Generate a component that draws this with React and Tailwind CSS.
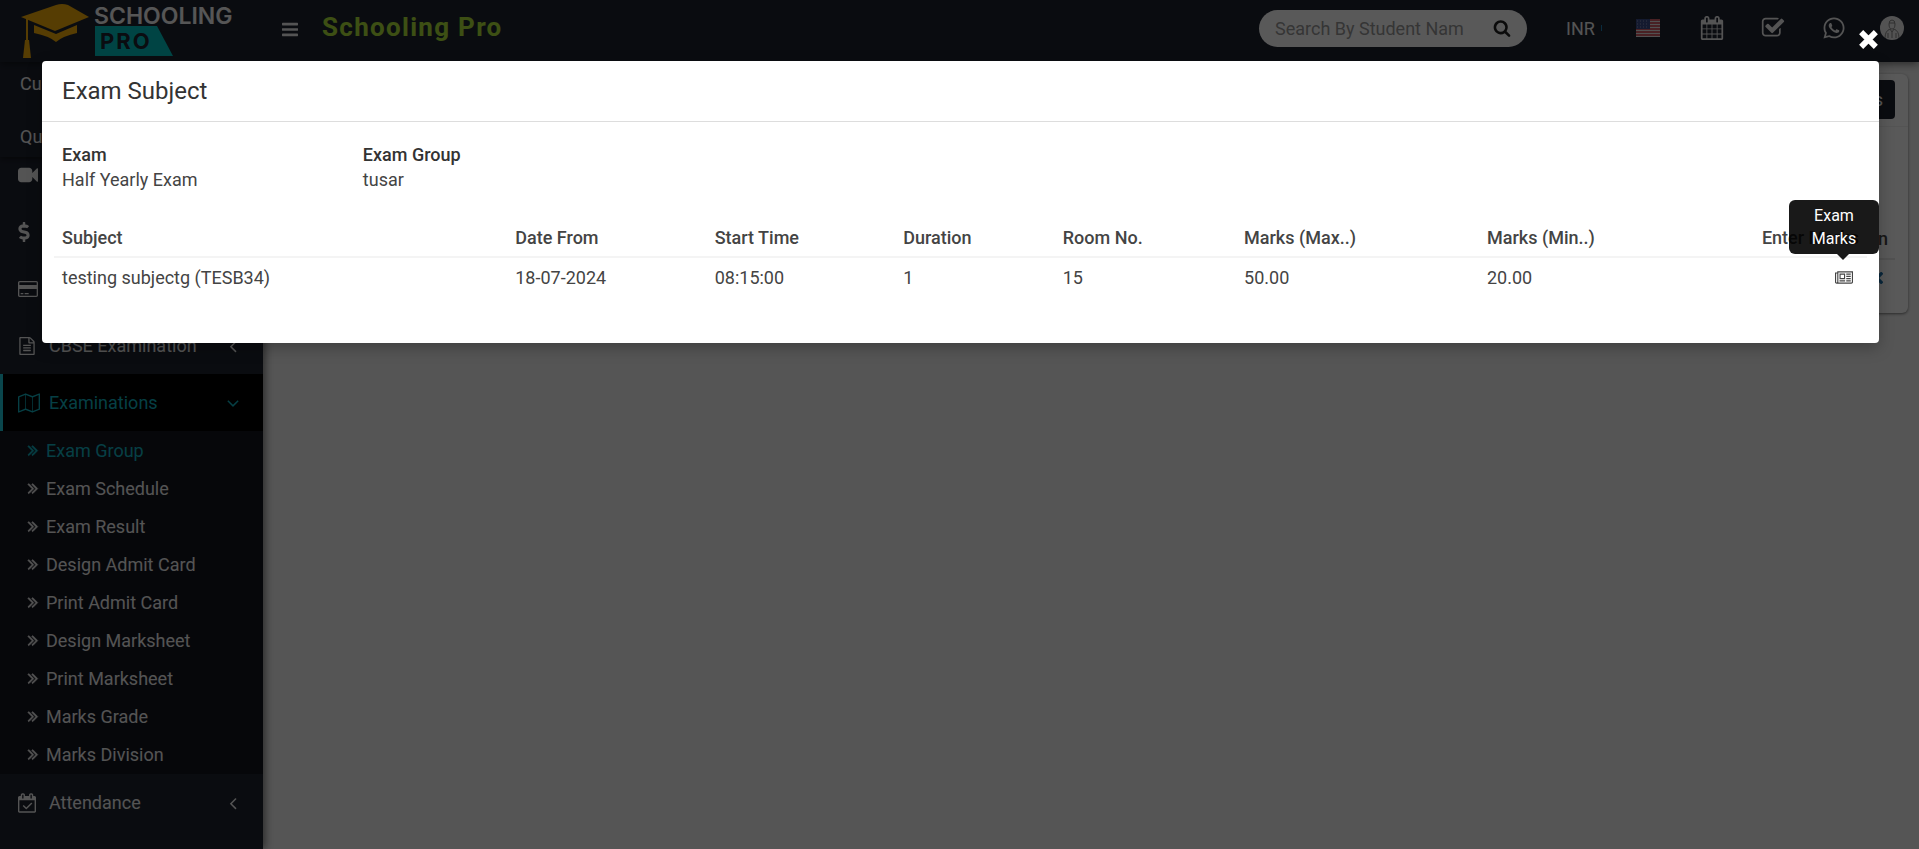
import React from 'react';
import { FaWhatsapp, FaDollarSign, FaTimes } from 'react-icons/fa';

const icons = {
  bars: { w: 1536, d: 'M1536 1344v128q0 26-19 45t-45 19h-1408q-26 0-45-19t-19-45v-128q0-26 19-45t45-19h1408q26 0 45 19t19 45zm0-512v128q0 26-19 45t-45 19h-1408q-26 0-45-19t-19-45v-128q0-26 19-45t45-19h1408q26 0 45 19t19 45zm0-512v128q0 26-19 45t-45 19h-1408q-26 0-45-19t-19-45v-128q0-26 19-45t45-19h1408q26 0 45 19t19 45z' },
  search: { w: 1792, d: 'M1216 832q0-185-131.5-316.5t-316.5-131.5-316.5 131.5-131.5 316.5 131.5 316.5 316.5 131.5 316.5-131.5 131.5-316.5zm512 832q0 52-38 90t-90 38q-54 0-90-38l-343-342q-179 124-399 124-143 0-273.5-55.5t-225-150-150-225-55.5-273.5 55.5-273.5 150-225 225-150 273.5-55.5 273.5 55.5 225 150 150 225 55.5 273.5q0 220-124 399l343 343q37 37 37 90z' },
  calendar: { w: 1792, d: 'M192 1664h288v-288h-288v288zm352 0h320v-288h-320v288zm-352-352h288v-320h-288v320zm352 0h320v-320h-320v320zm-352-384h288v-288h-288v288zm736 736h320v-288h-320v288zm-384-736h320v-288h-320v288zm768 736h288v-288h-288v288zm-384-352h320v-320h-320v320zm-352-864v-288q0-13-9.5-22.5t-22.5-9.5h-64q-13 0-22.5 9.5t-9.5 22.5v288q0 13 9.5 22.5t22.5 9.5h64q13 0 22.5-9.5t9.5-22.5zm736 864h288v-320h-288v320zm-384-384h320v-288h-320v288zm384 0h288v-288h-288v288zm32-480v-288q0-13-9.5-22.5t-22.5-9.5h-64q-13 0-22.5 9.5t-9.5 22.5v288q0 13 9.5 22.5t22.5 9.5h64q13 0 22.5-9.5t9.5-22.5zm384-64v1280q0 52-38 90t-90 38h-1408q-52 0-90-38t-38-90v-1280q0-52 38-90t90-38h128v-96q0-66 47-113t113-47h64q66 0 113 47t47 113v96h384v-96q0-66 47-113t113-47h64q66 0 113 47t47 113v96h128q52 0 90 38t38 90z' },
  checkSquare: { w: 1792, d: 'M1472 930v318q0 119-84.5 203.5t-203.5 84.5h-832q-119 0-203.5-84.5t-84.5-203.5v-832q0-119 84.5-203.5t203.5-84.5h832q63 0 117 25 15 7 18 23 3 17-9 29l-49 49q-10 10-23 10-3 0-9-2-23-6-45-6h-832q-66 0-113 47t-47 113v832q0 66 47 113t113 47h832q66 0 113-47t47-113v-254q0-13 9-22l64-64q10-10 23-10 6 0 12 3 20 8 20 29zm231-489l-814 814q-24 24-57 24t-57-24l-430-430q-24-24-24-57t24-57l110-110q24-24 57-24t57 24l263 263 647-647q24-24 57-24t57 24l110 110q24 24 24 57t-24 57z' },
  video: { w: 1792, d: 'M1792 352v1088q0 42-39 59-13 5-25 5-27 0-45-19l-403-403v166q0 119-84.5 203.5t-203.5 84.5h-704q-119 0-203.5-84.5t-84.5-203.5v-704q0-119 84.5-203.5t203.5-84.5h704q119 0 203.5 84.5t84.5 203.5v165l403-402q18-19 45-19 12 0 25 5 39 17 39 59z' },
  card: { w: 1920, d: 'M1760 128q66 0 113 47t47 113v1216q0 66-47 113t-113 47h-1600q-66 0-113-47t-47-113v-1216q0-66 47-113t113-47h1600zm-1600 128q-13 0-22.5 9.5t-9.5 22.5v224h1664v-224q0-13-9.5-22.5t-22.5-9.5h-1600zm1600 1280q13 0 22.5-9.5t9.5-22.5v-608h-1664v608q0 13 9.5 22.5t22.5 9.5h1600zm-1504-128v-128h256v128h-256zm384 0v-128h384v128h-384z' },
  file: { w: 1792, d: 'M1596 380q28 28 48 76t20 88v1152q0 40-28 68t-68 28h-1344q-40 0-68-28t-28-68v-1600q0-40 28-68t68-28h896q40 0 88 20t76 48zm-444-244v376h376q-10-29-22-41l-313-313q-12-12-41-22zm384 1528v-1024h-416q-40 0-68-28t-28-68v-416h-768v1536h1280zm-1024-864q0-14 9-23t23-9h704q14 0 23 9t9 23v64q0 14-9 23t-23 9h-704q-14 0-23-9t-9-23v-64zm736 224q14 0 23 9t9 23v64q0 14-9 23t-23 9h-704q-14 0-23-9t-9-23v-64q0-14 9-23t23-9h704zm0 256q14 0 23 9t9 23v64q0 14-9 23t-23 9h-704q-14 0-23-9t-9-23v-64q0-14 9-23t23-9h704z' },
  map: { w: 2048, d: 'M2020 11q28 20 28 53v1408q0 20-11 36t-29 23l-640 256q-24 11-48 0l-616-246-616 246q-10 5-24 5-19 0-36-11-28-20-28-53v-1408q0-20 11-36t29-23l640-256q24-11 48 0l616 246 616-246q32-13 60 6zm-1284 135v1270l576 230v-1270zm-608 217v1270l544-217v-1270zm1792 1066v-1270l-544 217v1270z' },
  calendarCheck: { w: 1664, d: 'M1303 964l-512 512q-10 9-23 9t-23-9l-288-288q-9-10-9-23t9-22l46-46q9-9 22-9t23 9l220 220 444-444q10-9 23-9t22 9l46 46q9 9 9 22t-9 23zm-1175 700h1408v-1024h-1408v1024zm384-1216v-288q0-14-9-23t-23-9h-64q-14 0-23 9t-9 23v288q0 14 9 23t23 9h64q14 0 23-9t9-23zm768 0v-288q0-14-9-23t-23-9h-64q-14 0-23 9t-9 23v288q0 14 9 23t23 9h64q14 0 23-9t9-23zm384-64v1280q0 52-38 90t-90 38h-1408q-52 0-90-38t-38-90v-1280q0-52 38-90t90-38h128v-96q0-66 47-113t113-47h64q66 0 113 47t47 113v96h384v-96q0-66 47-113t113-47h64q66 0 113 47t47 113v96h128q52 0 90 38t38 90z' },
  newspaper: { w: 2048, d: 'M1024 512h-384v384h384v-384zm128 640v128h-640v-128h640zm0-768v640h-640v-640h640zm640 768v128h-512v-128h512zm0-256v128h-512v-128h512zm0-256v128h-512v-128h512zm0-256v128h-512v-128h512zm-1536 960v-960h-128v960q0 26 19 45t45 19 45-19 19-45zm1664 0v-1088h-1536v1088q0 33-11 64h1483q26 0 45-19t19-45zm128-1216v1216q0 80-56 136t-136 56h-1664q-80 0-136-56t-56-136v-1088h256v-128h1792z' },
  angleLeft: { w: 1792, d: 'M1203 544q0 13-10 23l-393 393 393 393q10 10 10 23t-10 23l-50 50q-10 10-23 10t-23-10l-466-466q-10-10-10-23t10-23l466-466q10-10 23-10t23 10l50 50q10 10 10 23z' },
  angleDown: { w: 1792, d: 'M1395 736q0 13-10 23l-466 466q-10 10-23 10t-23-10l-466-466q-10-10-10-23t10-23l50-50q10-10 23-10t23 10l393 393 393-393q10-10 23-10t23 10l50 50q10 10 10 23z' },
  doubleRight: { w: 1792, d: 'M979 960q0 13-10 23l-466 466q-10 10-23 10t-23-10l-50-50q-10-10-10-23t10-23l393-393-393-393q-10-10-10-23t10-23l50-50q10-10 23-10t23 10l466 466q10 10 10 23zm384 0q0 13-10 23l-466 466q-10 10-23 10t-23-10l-50-50q-10-10-10-23t10-23l393-393-393-393q-10-10-10-23t10-23l50-50q10-10 23-10t23 10l466 466q10 10 10 23z' },
};

function Icon({ name, className }) {
  const icon = icons[name];
  return (
    <svg viewBox={`0 0 ${icon.w} 1792`} fill="currentColor" className={className} aria-hidden="true">
      <path d={icon.d} />
    </svg>
  );
}

const examLinks = [
  'Exam Group',
  'Exam Schedule',
  'Exam Result',
  'Design Admit Card',
  'Print Admit Card',
  'Design Marksheet',
  'Print Marksheet',
  'Marks Grade',
  'Marks Division',
];

const subjects = [
  { name: 'testing subjectg (TESB34)', date: '18-07-2024', time: '08:15:00', duration: '1', room: '15', max: '50.00', min: '20.00' },
];

function Logo() {
  return (
    <a href="#home" aria-label="Schooling Pro home" className="block w-[263px] shrink-0 pl-5">
      <svg viewBox="0 0 230 58" className="h-[58px] w-[230px]" aria-hidden="true">
        <g fill="#f5ae0a">
          <path d="M1 15L36 3q6-2 12 0l21 12-34 14z" />
          <path d="M14 23l22 9 21-9v8q-14 3-21 9-7-6-22-9z" />
          <path d="M6 17h2v22h-2z" />
          <path d="M5 38h4l2 18h-8z" />
        </g>
        <path d="M75 24h62l16 30h-78z" fill="#00c4c4" />
        <text x="74" y="22" fontSize="23" fontWeight="600" fontFamily="Inter, sans-serif" fill="#f5f5f5">SCHOOLING</text>
        <text x="80" y="47" fontSize="22" fontWeight="700" letterSpacing="2" fontFamily="Inter, sans-serif" fill="#1f2430">PRO</text>
      </svg>
    </a>
  );
}

function Flag() {
  return (
    <svg viewBox="0 0 24 18" className="h-[18px] w-6" aria-hidden="true">
      <path d="M0 0h24v18H0z" fill="#e8e8e8" />
      <path d="M0 1h24M0 4h24M0 7h24M0 10h24M0 13h24M0 16h24" stroke="#c8313e" strokeWidth="1.4" />
      <path d="M0 0h14v10H0z" fill="#3b4a86" />
      <path d="M1 2h12M1 5h12M1 8h12" stroke="#8d97bd" strokeDasharray="1 2" />
    </svg>
  );
}

function Header() {
  return (
    <header className="relative z-10 flex h-[62px] items-center bg-[#1f2430] text-[#f0f0f0] shadow-[0_2px_8px_rgba(0,0,0,0.5)]">
      <Logo />
      <button type="button" aria-label="Toggle navigation" className="ml-[19px] -mt-1">
        <Icon name="bars" className="h-[19px] w-4" />
      </button>
      <span className="ml-6 -mt-2 text-[26px] font-bold tracking-wider text-[#aee239]">Schooling Pro</span>
      <div className="ml-auto flex h-full items-center pb-[6px] pr-[15px]">
        <form className="flex h-[37px] w-[268px] items-center rounded-full bg-white pl-4 pr-4">
          <input
            type="text"
            aria-label="Search students"
            placeholder="Search By Student Nam"
            className="w-full min-w-0 text-[18px] outline-none placeholder:text-[#999]"
          />
          <button type="button" aria-label="Search" className="shrink-0 text-[#222]">
            <Icon name="search" className="h-[18px] w-[18px]" />
          </button>
        </form>
        <button type="button" className="ml-[39px] flex w-9 items-center justify-between text-[18px]">
          INR
          <span className="h-[6px] w-px bg-[#1f7fb5]" />
        </button>
        <button type="button" aria-label="Language" className="ml-[34px]"><Flag /></button>
        <button type="button" aria-label="Calendar" className="ml-10">
          <Icon name="calendar" className="h-6 w-6" />
        </button>
        <button type="button" aria-label="Tasks" className="ml-[37px]">
          <Icon name="checkSquare" className="h-6 w-6" />
        </button>
        <button type="button" aria-label="WhatsApp" className="ml-[37px]"><FaWhatsapp className="h-6 w-6" /></button>
        <button type="button" aria-label="Profile" className="ml-[34px] h-6 w-6 overflow-hidden rounded-full bg-[#eee]">
          <svg viewBox="0 0 24 24" fill="none" stroke="#888" aria-hidden="true">
            <path d="M9 8q0-4 3-4t3 4q0 5-3 5t-3-5zM9 7h6M5 22q0-7 5-9l2 3 2-3q5 2 5 9M12 16v6M8 17v5M16 17v5" />
          </svg>
        </button>
      </div>
    </header>
  );
}

function MenuItem({ icon, label, name }) {
  return (
    <a href="#menu" aria-label={name} className="flex h-[57px] items-center pl-[18px] pr-5">
      <span className="flex w-[31px] shrink-0">{icon}</span>
      <span className="grow">{label}</span>
      <Icon name="angleLeft" className="h-5 w-5" />
    </a>
  );
}

function Sidebar() {
  return (
    <aside className="z-[5] w-[263px] shrink-0 bg-[#1f2430] text-[18px] text-[#f0f0f0] shadow-[2px_0_8px_rgba(0,0,0,0.5)]">
      <div className="relative z-[1] h-[95px] bg-[#1f2430] pl-5 pt-2 shadow-[0_2px_6px_rgba(0,0,0,0.5)]">
        <p className="h-[53px] leading-7">Current Session</p>
        <p className="leading-7">Quick Links</p>
      </div>
      <nav className="-mt-[11px]">
        <MenuItem icon={<Icon name="video" className="h-5 w-5" />} name="Live Classes" />
        <MenuItem icon={<FaDollarSign className="h-5 w-3" />} name="Fees" />
        <MenuItem icon={<Icon name="card" className="h-5 w-5" />} name="Income" />
        <MenuItem icon={<Icon name="file" className="h-5 w-[18px]" />} label="CBSE Examination" />
        <a href="#examinations" className="flex h-[57px] items-center border-l-[3px] border-[#1fc8db] bg-black pl-[15px] pr-5 text-[#12b5c4]">
          <span className="flex w-[31px] shrink-0"><Icon name="map" className="h-5 w-[22px]" /></span>
          <span className="grow">Examinations</span>
          <Icon name="angleDown" className="h-5 w-5" />
        </a>
        <ul className="bg-[#12141f] pb-px">
          {examLinks.map((label, i) => (
            <li key={label}>
              <a href="#exam" className={i === 0 ? 'flex h-[38px] items-center pl-6 text-[#12b5c4]' : 'flex h-[38px] items-center pl-6'}>
                <Icon name="doubleRight" className="mr-1 h-[18px] w-[18px] stroke-current stroke-[60]" />
                {label}
              </a>
            </li>
          ))}
        </ul>
        <MenuItem icon={<Icon name="calendarCheck" className="h-5 w-[18px]" />} label="Attendance" />
      </nav>
    </aside>
  );
}

function ExamGroupCard() {
  return (
    <div className="h-[239px] rounded-md bg-white text-[18px] shadow-[0_1px_3px_rgba(0,0,0,0.5)]">
      <div className="flex h-[53px] items-start justify-end border-b border-[#f0f0f0] px-[13px] pt-[6px]">
        <button type="button" className="h-[39px] rounded bg-[#1f2430] px-3 text-white">Exams</button>
      </div>
      <div className="px-[13px] pt-[91px]">
        <div className="flex h-[42px] items-center justify-end border-b-2 border-[#e8e8e8] pr-[7px] font-medium text-[#444]">Action</div>
        <div className="flex h-9 items-center justify-end pr-3 text-[#1a6fa8]">
          <button type="button" aria-label="Remove"><FaTimes className="h-[18px] w-3" /></button>
        </div>
      </div>
    </div>
  );
}

function ExamSubjectModal() {
  return (
    <div role="dialog" aria-label="Exam Subject" className="relative rounded bg-white text-[18px] text-[#444] shadow-[0_5px_15px_rgba(0,0,0,0.25)]">
      <button type="button" aria-label="Close" className="absolute -top-8 right-0 text-white">
        <svg viewBox="0 0 20 20" className="h-[21px] w-[21px]" aria-hidden="true">
          <path d="M3 3l14 14M17 3L3 17" stroke="currentColor" strokeWidth="5.5" />
        </svg>
      </button>
      <h4 className="flex h-[61px] items-center border-b border-[#ddd] px-5 text-[24px] text-[#333]">Exam Subject</h4>
      <div className="px-3 pb-[46px] pt-5">
        <dl className="flex pl-2 leading-[25px]">
          <div className="w-1/6">
            <dt className="font-medium text-[#333]">Exam</dt>
            <dd>Half Yearly Exam</dd>
          </div>
          <div>
            <dt className="font-medium text-[#333]">Exam Group</dt>
            <dd>tusar</dd>
          </div>
        </dl>
        <table className="mt-[27px] w-full table-fixed text-left">
          <thead>
            <tr className="h-[38px] border-b-2 border-[#f4f4f4]">
              <th className="w-[25%] px-2 font-medium">Subject</th>
              <th className="w-[11%] px-2 font-medium">Date From</th>
              <th className="w-[10.4%] px-2 font-medium">Start Time</th>
              <th className="w-[8.8%] px-2 font-medium">Duration</th>
              <th className="w-[10%] px-2 font-medium">Room No.</th>
              <th className="w-[13.4%] px-2 font-medium">Marks (Max..)</th>
              <th className="px-2 font-medium">Marks (Min..)</th>
              <th className="w-[10%] px-2 text-right font-medium">Enter Marks</th>
            </tr>
          </thead>
          <tbody>
            {subjects.map((s) => (
              <tr key={s.name} className="h-10">
                <td className="px-2">{s.name}</td>
                <td className="px-2">{s.date}</td>
                <td className="px-2">{s.time}</td>
                <td className="px-2">{s.duration}</td>
                <td className="px-2">{s.room}</td>
                <td className="px-2">{s.max}</td>
                <td className="px-2">{s.min}</td>
                <td className="px-2">
                  <div className="relative ml-auto mr-[6px] w-[18px]">
                    <button type="button" aria-label="Exam Marks" className="block">
                      <Icon name="newspaper" className="h-4 w-[18px]" />
                    </button>
                    <div role="tooltip" className="absolute -right-[26px] bottom-8 w-[90px] rounded-md bg-black/90 px-4 py-1 text-center text-base leading-[23px] text-white">
                      Exam Marks
                      <span className="absolute left-12 top-full border-x-6 border-t-6 border-x-transparent border-t-black/90" />
                    </div>
                  </div>
                </td>
              </tr>
            ))}
          </tbody>
        </table>
      </div>
    </div>
  );
}

function App() {
  return (
    <div className="relative flex h-screen flex-col overflow-hidden bg-[#f3f3f3] font-['Roboto',sans-serif]">
      <Header />
      <div className="flex min-h-0 grow">
        <Sidebar />
        <main className="grow pl-3 pr-[11px] pt-3">
          <ExamGroupCard />
        </main>
      </div>
      <div className="absolute inset-0 z-20 bg-black/65 pl-[42px] pr-10 pt-[61px]">
        <ExamSubjectModal />
      </div>
    </div>
  );
}

export default App;
